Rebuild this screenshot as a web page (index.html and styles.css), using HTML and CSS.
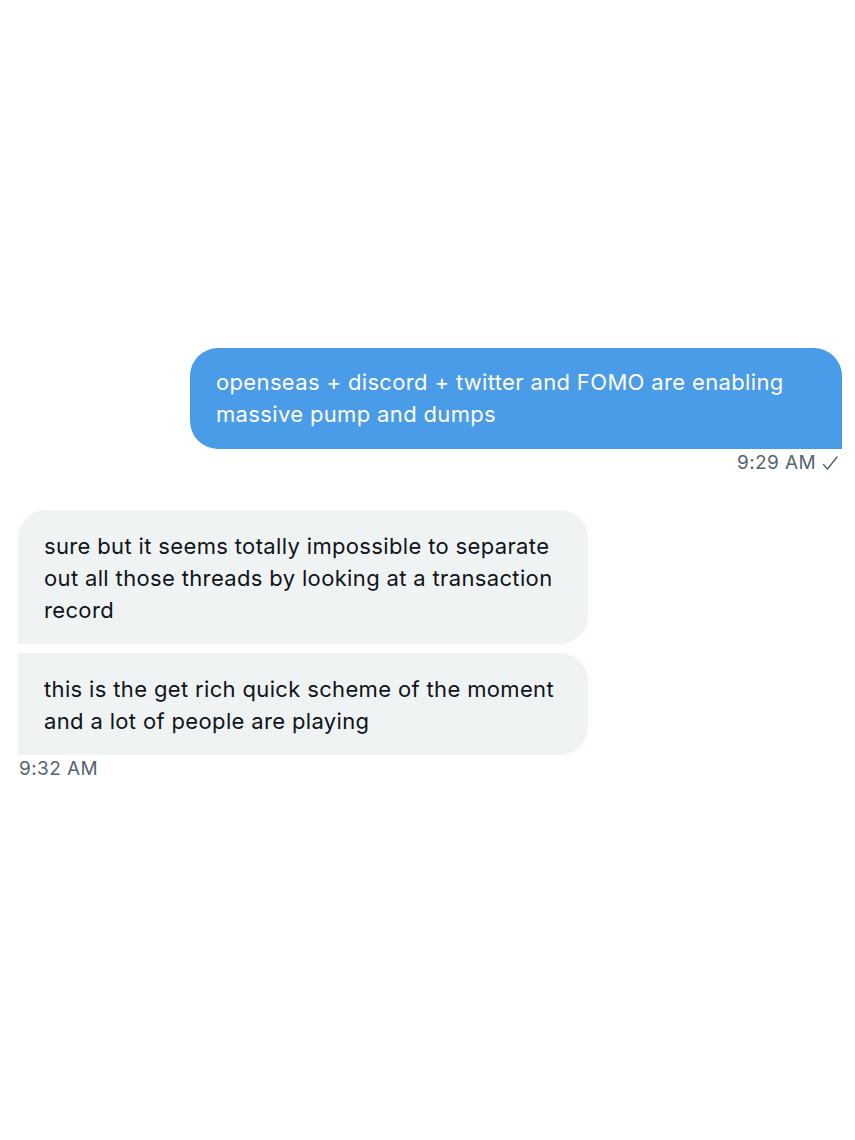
FILE: index.html
```html
<!DOCTYPE html>
<html>
<head>
<meta charset="utf-8">
<link rel="stylesheet" href="styles.css">
</head>
<body>
<div class="chat">
  <div class="group sent">
    <div class="bubble blue">openseas + discord + twitter and FOMO are enabling massive pump and dumps</div>
    <div class="meta right">9:29 AM
      <svg class="check" width="18" height="18" viewBox="0 0 18 18"><path d="M2.5 10.5 L6.5 15 L16 3" fill="none" stroke="#536471" stroke-width="1.4" stroke-linecap="round" stroke-linejoin="round"/></svg>
    </div>
  </div>
  <div class="group received">
    <div class="bubble gray first">sure but it seems totally impossible to separate out all those threads by looking at a transaction record</div>
    <div class="bubble gray last">this is the get rich quick scheme of the moment and a lot of people are playing</div>
    <div class="meta">9:32 AM</div>
  </div>
</div>
</body>
</html>
```
FILE: styles.css
```css
html, body {
  margin: 0;
  padding: 0;
  background: #ffffff;
}
body {
  font-family: "Inter", "Liberation Sans", sans-serif;
  color: #0f1419;
  width: 855px;
  height: 1140px;
}
.chat {
  display: flex;
  flex-direction: column;
  padding: 348px 13px 0 18px;
}
.group {
  display: flex;
  flex-direction: column;
}
.sent {
  align-items: flex-end;
}
.received {
  align-items: flex-start;
  margin-top: 35px;
  gap: 9px;
}
.bubble {
  box-sizing: border-box;
  font-size: 22px;
  line-height: 32px;
  padding: 18px 26px 19px 26px;
  letter-spacing: 0.35px;
}
.blue {
  width: 652px;
  background: #4a9be8;
  color: #ffffff;
  border-radius: 28px 28px 0 28px;
}
.gray {
  width: 570px;
  padding-top: 20px;
  padding-bottom: 18px;
  background: #eff3f4;
  color: #0f1419;
}
.first {
  border-radius: 28px 28px 28px 0;
}
.last {
  border-radius: 0 28px 28px 0;
}
.meta {
  font-size: 19px;
  line-height: 24px;
  letter-spacing: 0.4px;
  color: #536471;
  margin-top: 2px;
  display: flex;
  align-items: center;
  gap: 5px;
}
.received .meta {
  margin-top: -7px;
  padding-left: 1px;
}
.check {
  display: block;
  margin-right: 3px;
}
```
